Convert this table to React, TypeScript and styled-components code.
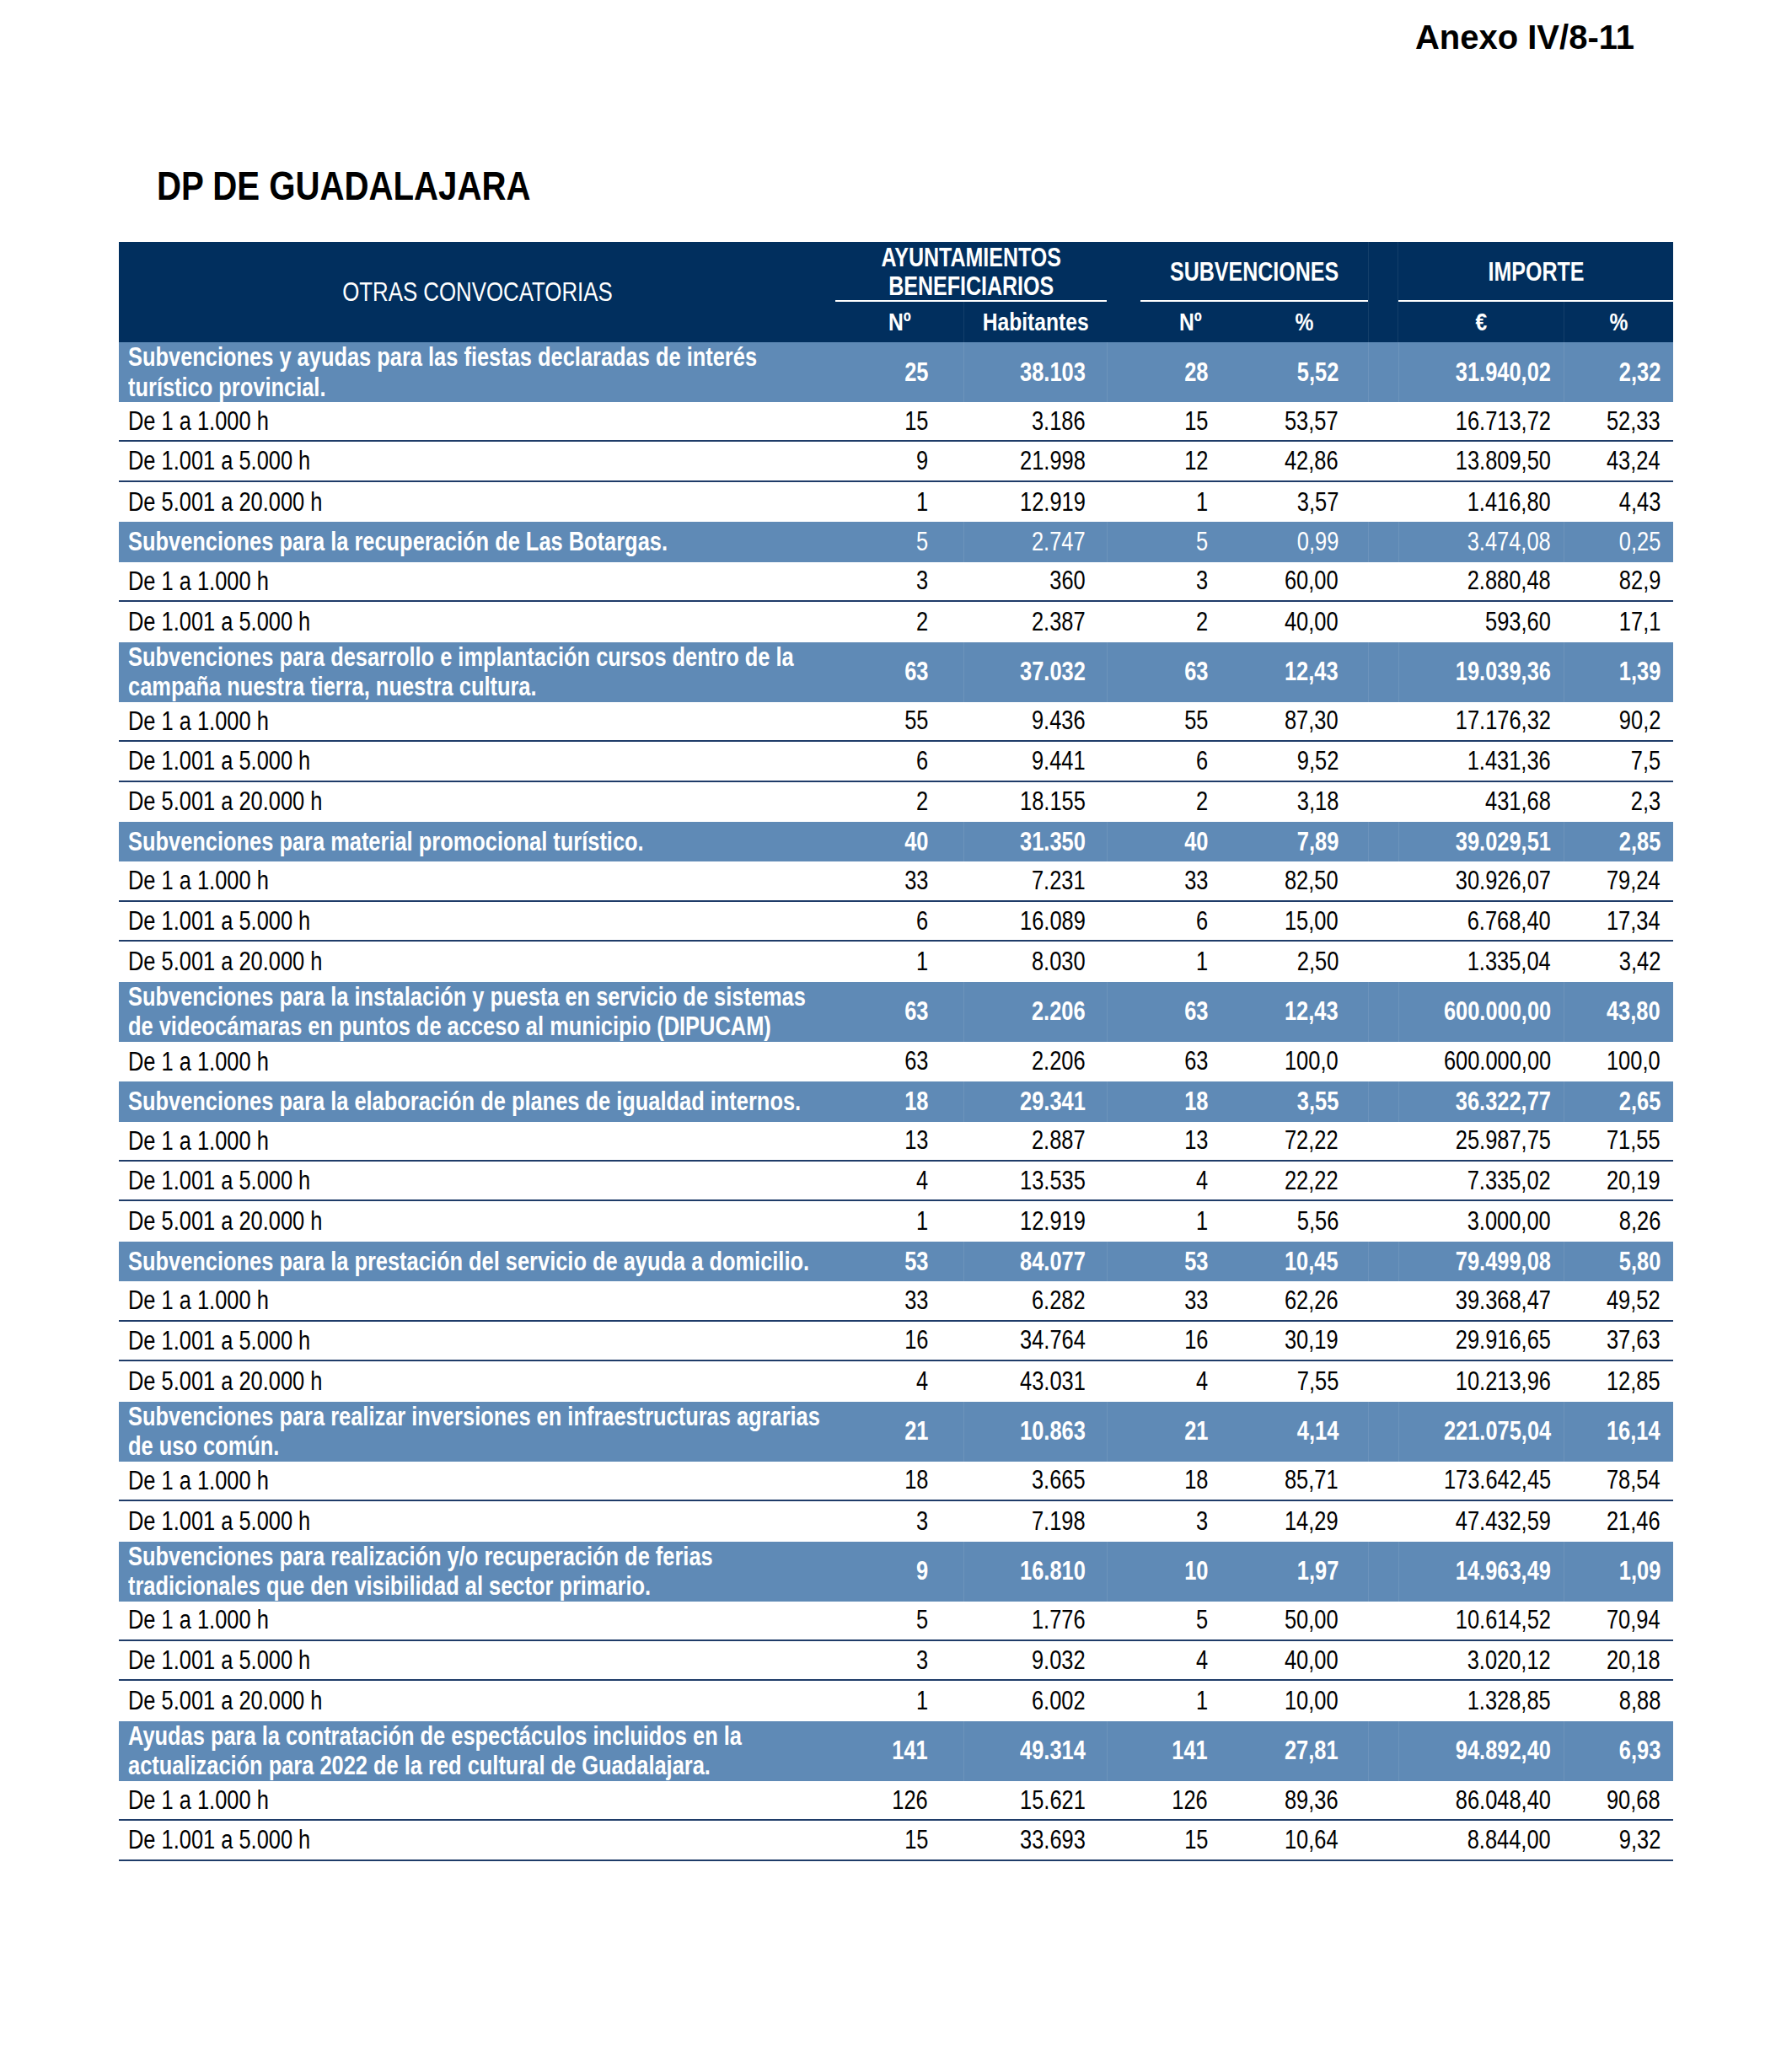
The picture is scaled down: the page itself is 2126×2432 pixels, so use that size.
import React from "react";
import styled, { createGlobalStyle } from "styled-components";

const SANS = "'Liberation Sans', Arial, sans-serif";

const GlobalStyle = createGlobalStyle`
  html, body { margin: 0; padding: 0; background: #ffffff; }
  body { font-family: ${SANS}; color: #000; }
`;

const COLS = "850px 152px 170px 40px 118px 152px 36px 196px 130px";
const NAVY = "#012f5e";
const STEEL = "#5f8ab6";
const LINE = "#1f3c69";

/* Arial Narrow is not available: Liberation Sans squeezed to its width */
const Narrow = styled.span<{ $origin: "left" | "right" | "center" }>`
  display: inline-block;
  white-space: nowrap;
  transform: scaleX(0.82);
  transform-origin: ${(p) => p.$origin} center;
`;

const Page = styled.div`
  width: 2126px;
  padding-top: 20px;
  box-sizing: border-box;
`;

const Annex = styled.div`
  text-align: right;
  padding-right: 187px;
  font-weight: 700;
  font-size: 40px;
  line-height: 48px;
`;

const Title = styled.h1`
  margin: 123px 0 0;
  padding-left: 186px;
  font-weight: 700;
  font-size: 49px;
  line-height: 58px;
`;

const Table = styled.div`
  margin: 38px 0 60px 141px;
  width: 1844px;
`;

const Head = styled.div`
  display: grid;
  grid-template-columns: ${COLS};
  grid-template-rows: 71px 48px;
  background: ${NAVY};
  color: #fff;
`;

const Corner = styled.div`
  grid-column: 1;
  grid-row: 1 / span 2;
  display: flex;
  align-items: center;
  justify-content: center;
  font-size: 31.5px;
  font-weight: 400;
`;

const GroupHead = styled.div<{ $col: string }>`
  grid-column: ${(p) => p.$col};
  grid-row: 1;
  display: flex;
  align-items: center;
  justify-content: center;
  text-align: center;
  font-size: 30.5px;
  font-weight: 700;
  line-height: 34px;
  border-bottom: 2px solid #ffffff;
`;

const Gap = styled.div<{ $col: number; $row: string; $rule?: boolean }>`
  grid-column: ${(p) => p.$col};
  grid-row: ${(p) => p.$row};
  border-left: ${(p) => (p.$rule ? "1px solid rgba(255,255,255,0.08)" : "none")};
  border-right: ${(p) => (p.$rule ? "1px solid rgba(255,255,255,0.08)" : "none")};
`;

const SubHead = styled.div<{ $col: number; $rule?: boolean }>`
  grid-column: ${(p) => p.$col};
  grid-row: 2;
  display: flex;
  align-items: center;
  justify-content: center;
  font-size: 30px;
  font-weight: 700;
  border-left: ${(p) => (p.$rule ? "1px solid rgba(255,255,255,0.08)" : "none")};
`;

const Row = styled.div<{ $group?: boolean; $lines: number; $rule?: boolean }>`
  display: grid;
  grid-template-columns: ${COLS};
  box-sizing: border-box;
  height: ${(p) => (p.$lines > 1 ? "71px" : "47.45px")};
  background: ${(p) => (p.$group ? STEEL : "#ffffff")};
  color: ${(p) => (p.$group ? "#ffffff" : "#000000")};
  font-weight: ${(p) => (p.$group ? 700 : 400)};
  border-bottom: ${(p) => (p.$rule ? `2px solid ${LINE}` : "none")};
  font-size: 31px;
`;

const Label = styled.div`
  display: flex;
  align-items: center;
  padding-left: 11px;
  line-height: 35.5px;
  white-space: nowrap;
`;

const Num = styled.div<{ $pad: number; $light?: boolean; $rule?: boolean }>`
  display: flex;
  align-items: center;
  justify-content: flex-end;
  padding-right: ${(p) => p.$pad}px;
  font-weight: ${(p) => (p.$light ? 400 : "inherit")};
  white-space: nowrap;
  border-left: ${(p) => (p.$rule ? "1px solid rgba(255,255,255,0.09)" : "none")};
`;

const Spacer = styled.div<{ $rule?: boolean }>`
  border-left: ${(p) => (p.$rule ? "1px solid rgba(255,255,255,0.09)" : "none")};
`;

type Vals = [string, string, string, string, string, string];
type Item = { label: string; v: Vals };
type Group = { lines: string[]; v: Vals; light?: boolean; items: Item[] };

const A = "De 1 a 1.000 h";
const B = "De 1.001 a 5.000 h";
const C = "De 5.001 a 20.000 h";

const DATA: Group[] = [
  {
    lines: ["Subvenciones y ayudas para las fiestas declaradas de interés", "turístico provincial."],
    v: ["25", "38.103", "28", "5,52", "31.940,02", "2,32"],
    items: [
      { label: A, v: ["15", "3.186", "15", "53,57", "16.713,72", "52,33"] },
      { label: B, v: ["9", "21.998", "12", "42,86", "13.809,50", "43,24"] },
      { label: C, v: ["1", "12.919", "1", "3,57", "1.416,80", "4,43"] },
    ],
  },
  {
    lines: ["Subvenciones para la recuperación de Las Botargas."],
    v: ["5", "2.747", "5", "0,99", "3.474,08", "0,25"],
    light: true,
    items: [
      { label: A, v: ["3", "360", "3", "60,00", "2.880,48", "82,9"] },
      { label: B, v: ["2", "2.387", "2", "40,00", "593,60", "17,1"] },
    ],
  },
  {
    lines: ["Subvenciones para desarrollo e implantación cursos dentro de la", "campaña nuestra tierra, nuestra cultura."],
    v: ["63", "37.032", "63", "12,43", "19.039,36", "1,39"],
    items: [
      { label: A, v: ["55", "9.436", "55", "87,30", "17.176,32", "90,2"] },
      { label: B, v: ["6", "9.441", "6", "9,52", "1.431,36", "7,5"] },
      { label: C, v: ["2", "18.155", "2", "3,18", "431,68", "2,3"] },
    ],
  },
  {
    lines: ["Subvenciones para material promocional turístico."],
    v: ["40", "31.350", "40", "7,89", "39.029,51", "2,85"],
    items: [
      { label: A, v: ["33", "7.231", "33", "82,50", "30.926,07", "79,24"] },
      { label: B, v: ["6", "16.089", "6", "15,00", "6.768,40", "17,34"] },
      { label: C, v: ["1", "8.030", "1", "2,50", "1.335,04", "3,42"] },
    ],
  },
  {
    lines: ["Subvenciones para la instalación y puesta en servicio de sistemas", "de videocámaras en puntos de acceso al municipio (DIPUCAM)"],
    v: ["63", "2.206", "63", "12,43", "600.000,00", "43,80"],
    items: [{ label: A, v: ["63", "2.206", "63", "100,0", "600.000,00", "100,0"] }],
  },
  {
    lines: ["Subvenciones para la elaboración de planes de igualdad internos."],
    v: ["18", "29.341", "18", "3,55", "36.322,77", "2,65"],
    items: [
      { label: A, v: ["13", "2.887", "13", "72,22", "25.987,75", "71,55"] },
      { label: B, v: ["4", "13.535", "4", "22,22", "7.335,02", "20,19"] },
      { label: C, v: ["1", "12.919", "1", "5,56", "3.000,00", "8,26"] },
    ],
  },
  {
    lines: ["Subvenciones para la prestación del servicio de ayuda a domicilio."],
    v: ["53", "84.077", "53", "10,45", "79.499,08", "5,80"],
    items: [
      { label: A, v: ["33", "6.282", "33", "62,26", "39.368,47", "49,52"] },
      { label: B, v: ["16", "34.764", "16", "30,19", "29.916,65", "37,63"] },
      { label: C, v: ["4", "43.031", "4", "7,55", "10.213,96", "12,85"] },
    ],
  },
  {
    lines: ["Subvenciones para realizar inversiones en infraestructuras agrarias", "de uso común."],
    v: ["21", "10.863", "21", "4,14", "221.075,04", "16,14"],
    items: [
      { label: A, v: ["18", "3.665", "18", "85,71", "173.642,45", "78,54"] },
      { label: B, v: ["3", "7.198", "3", "14,29", "47.432,59", "21,46"] },
    ],
  },
  {
    lines: ["Subvenciones para realización y/o recuperación de ferias", "tradicionales que den visibilidad al sector primario."],
    v: ["9", "16.810", "10", "1,97", "14.963,49", "1,09"],
    items: [
      { label: A, v: ["5", "1.776", "5", "50,00", "10.614,52", "70,94"] },
      { label: B, v: ["3", "9.032", "4", "40,00", "3.020,12", "20,18"] },
      { label: C, v: ["1", "6.002", "1", "10,00", "1.328,85", "8,88"] },
    ],
  },
  {
    lines: ["Ayudas para la contratación de espectáculos incluidos en la", "actualización para 2022 de la red cultural de Guadalajara."],
    v: ["141", "49.314", "141", "27,81", "94.892,40", "6,93"],
    items: [
      { label: A, v: ["126", "15.621", "126", "89,36", "86.048,40", "90,68"] },
      { label: B, v: ["15", "33.693", "15", "10,64", "8.844,00", "9,32"] },
    ],
  },
];

const PADS = [42, 25, 38, 35, 15, 15];

function N({ children, light, rule, pad }: { children: string; light?: boolean; rule?: boolean; pad: number }) {
  return (
    <Num $pad={pad} $light={light} $rule={rule}>
      <Narrow $origin="right">{children}</Narrow>
    </Num>
  );
}

function Values({ v, light, group }: { v: Vals; light?: boolean; group?: boolean }) {
  return (
    <>
      <N pad={PADS[0]} light={light}>{v[0]}</N>
      <N pad={PADS[1]} light={light} rule={group}>{v[1]}</N>
      <Spacer $rule={group} />
      <N pad={PADS[2]} light={light}>{v[2]}</N>
      <N pad={PADS[3]} light={light}>{v[3]}</N>
      <Spacer $rule={group} />
      <N pad={PADS[4]} light={light} rule={group}>{v[4]}</N>
      <N pad={PADS[5]} light={light} rule={group}>{v[5]}</N>
    </>
  );
}

export default function App() {
  return (
    <>
      <GlobalStyle />
      <Page>
        <Annex>Anexo IV/8-11</Annex>
        <Title>
          <Narrow $origin="left">DP DE GUADALAJARA</Narrow>
        </Title>
        <Table>
          <Head>
            <Corner>
              <Narrow $origin="center">OTRAS CONVOCATORIAS</Narrow>
            </Corner>
            <GroupHead $col="2 / span 2">
              <Narrow $origin="center">
                AYUNTAMIENTOS
                <br />
                BENEFICIARIOS
              </Narrow>
            </GroupHead>
            <Gap $col={4} $row="1 / span 2" />
            <GroupHead $col="5 / span 2">
              <Narrow $origin="center">SUBVENCIONES</Narrow>
            </GroupHead>
            <Gap $col={7} $row="1 / span 2" $rule />
            <GroupHead $col="8 / span 2">
              <Narrow $origin="center">IMPORTE</Narrow>
            </GroupHead>
            <SubHead $col={2}><Narrow $origin="center">Nº</Narrow></SubHead>
            <SubHead $col={3} $rule><Narrow $origin="center">Habitantes</Narrow></SubHead>
            <SubHead $col={5}><Narrow $origin="center">Nº</Narrow></SubHead>
            <SubHead $col={6}><Narrow $origin="center">%</Narrow></SubHead>
            <SubHead $col={8}><Narrow $origin="center">€</Narrow></SubHead>
            <SubHead $col={9} $rule><Narrow $origin="center">%</Narrow></SubHead>
          </Head>
          {DATA.map((g, gi) => (
            <React.Fragment key={gi}>
              <Row $group $lines={g.lines.length}>
                <Label>
                  <Narrow $origin="left">
                    {g.lines.map((l, li) => (
                      <React.Fragment key={li}>
                        {li > 0 && <br />}
                        {l}
                      </React.Fragment>
                    ))}
                  </Narrow>
                </Label>
                <Values v={g.v} light={g.light} group />
              </Row>
              {g.items.map((it, ii) => {
                const last = ii === g.items.length - 1;
                const finalRow = gi === DATA.length - 1 && last;
                return (
                  <Row key={ii} $lines={1} $rule={!last || finalRow}>
                    <Label>
                      <Narrow $origin="left">{it.label}</Narrow>
                    </Label>
                    <Values v={it.v} />
                  </Row>
                );
              })}
            </React.Fragment>
          ))}
        </Table>
      </Page>
    </>
  );
}
